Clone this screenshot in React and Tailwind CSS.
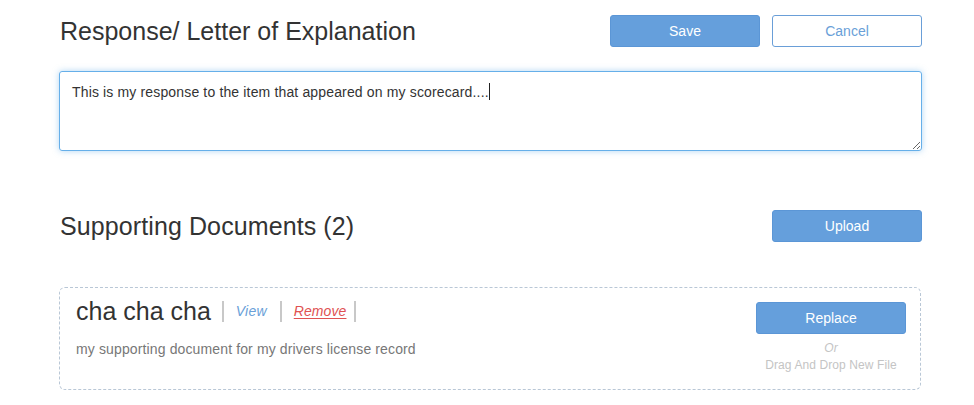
export default function App() {
  return (
    <div className="w-[974px] h-[405px] bg-white font-['Liberation_Sans',Arial,sans-serif] text-[#333] overflow-hidden">
      <div className="pl-[59px] pr-[52px] pt-[15px]">
        <div className="flex items-center justify-between h-[32px]">
          <h1 className="text-[25px] leading-none pl-[1px]">Response/ Letter of Explanation</h1>
          <div className="flex gap-[12px]">
            <button className="w-[150px] h-[32px] rounded-[3px] bg-[#659fdc] border border-[#5b96d6] text-white text-[14px]">Save</button>
            <button className="w-[150px] h-[32px] rounded-[3px] bg-white border border-[#6a9fd8] text-[#6a9fd8] text-[14px]">Cancel</button>
          </div>
        </div>

        <div className="relative mt-[24px]">
          <textarea
            className="block w-full h-[80px] rounded-[3px] border border-[#66afe9] shadow-[0_0_6px_rgba(102,175,233,0.5)] px-[12px] py-[10px] text-[14px] tracking-[0.15px] text-[#333] outline-none resize-y"
            defaultValue="This is my response to the item that appeared on my scorecard...."
          />
          <span className="absolute left-[430px] top-[12px] w-[1px] h-[17px] bg-[#222]" />
        </div>

        <div className="mt-[59px] flex items-center justify-between h-[32px]">
          <h2 className="text-[25px] leading-none pl-[1px] tracking-[0.1px]">Supporting Documents (2)</h2>
          <button className="w-[150px] h-[32px] rounded-[3px] bg-[#659fdc] border border-[#5b96d6] text-white text-[14px]">Upload</button>
        </div>

        <div className="mt-[45px] mr-[1px] h-[103px] rounded-[6px] border border-dashed border-[#b9c7d6] flex justify-between pl-[16px] pr-[14px] pt-[10px]">
          <div>
            <div className="flex items-center h-[26px]">
              <span className="text-[25px] leading-none">cha cha cha</span>
              <span className="ml-[11px] mr-[12px] w-[2px] h-[21px] bg-[#c8c8c8]" />
              <a className="text-[14px] italic tracking-[0.2px] text-[#6a9fd8]">View</a>
              <span className="ml-[13px] mr-[12px] w-[2px] h-[21px] bg-[#c8c8c8]" />
              <a className="text-[14px] italic tracking-[0.1px] text-[#e05252] underline underline-offset-2">Remove</a>
              <span className="ml-[8px] w-[2px] h-[21px] bg-[#c8c8c8]" />
            </div>
            <p className="mt-[15px] text-[14px] tracking-[0.13px] text-[#777]">my supporting document for my drivers license record</p>
          </div>
          <div className="flex flex-col items-center pt-[4px]">
            <button className="w-[150px] h-[32px] rounded-[3px] bg-[#659fdc] border border-[#5b96d6] text-white text-[14px]">Replace</button>
            <span className="mt-[6px] text-[12px] italic text-[#c4c4c4] leading-[16px]">Or</span>
            <span className="text-[12px] text-[#c4c4c4] leading-[18px] tracking-[0.1px]">Drag And Drop New File</span>
          </div>
        </div>
      </div>
    </div>
  );
}
